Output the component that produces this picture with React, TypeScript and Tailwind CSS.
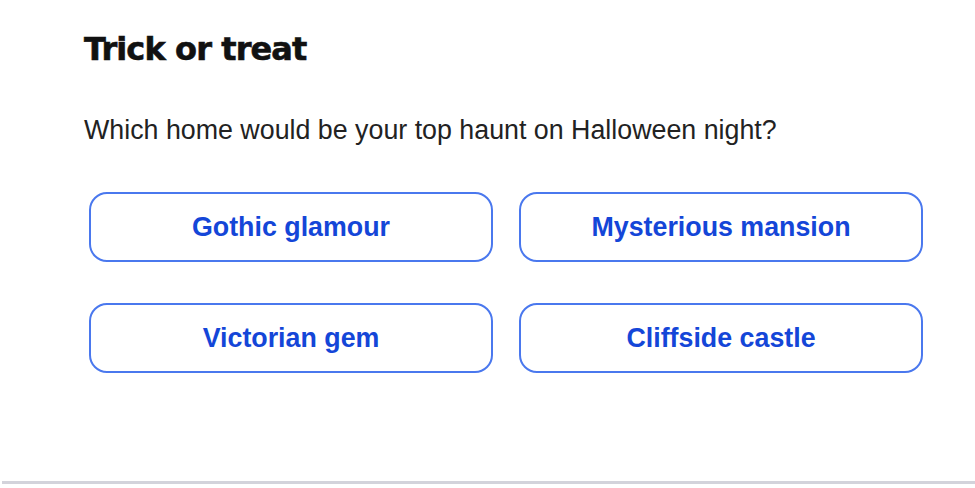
const OPTIONS = ['Gothic glamour', 'Mysterious mansion', 'Victorian gem', 'Cliffside castle']

export default function App() {
  return (
    <div className="w-[975px] h-[488px] bg-white flex flex-col font-['Liberation_Sans',Arial,sans-serif]">
      <div className="flex-1 pl-[84px] pt-[29px]">
        <h1 className="font-['DejaVu_Sans',sans-serif] text-[32px] leading-[40px] font-bold tracking-[-0.9px] text-[#111] [-webkit-text-stroke:0.6px_#111]">
          Trick or treat
        </h1>
        <p className="mt-[43px] text-[26.8px] leading-[36px] text-[#222]">
          Which home would be your top haunt on Halloween night?
        </p>
        <div className="mt-[44px] ml-[5px] grid grid-cols-[404px_404px] gap-x-[26px] gap-y-[41px]">
          {OPTIONS.map(opt => (
            <button
              key={opt}
              className="h-[70px] rounded-[18px] border-2 border-[#4a78ee] bg-white text-[26.8px] font-bold text-[#1446d8]"
            >
              {opt}
            </button>
          ))}
        </div>
      </div>
      <div className="ml-[2px] mb-[4px] h-[3px] bg-[#d3d3db]" />
    </div>
  )
}
